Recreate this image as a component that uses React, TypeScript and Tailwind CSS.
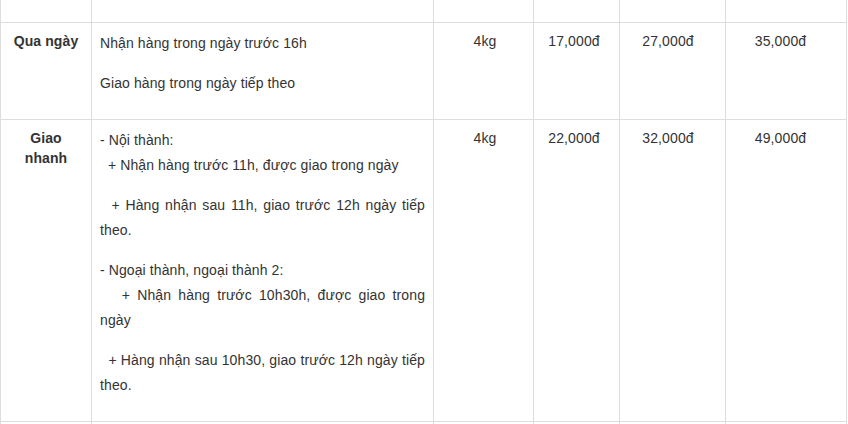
import React from "react";

const b = "border-r border-[#dddddd]";
const cols = "grid grid-cols-[91px_342px_100px_86px_106px_121px]";

export default function App() {
  const nb = "\u00a0";
  return (
    <div
      className="w-[848px] h-[424px] overflow-hidden bg-white text-[14px] leading-[20px] tracking-[0.1px] text-[#333333]"
      style={{ fontFamily: '"Liberation Sans", Arial, sans-serif' }}
    >
      <div className="w-[847px] border-l border-[#dddddd]">
        {/* previous row (cut off) */}
        <div className={`${cols} h-[23px] border-b border-[#dddddd]`}>
          <div className={b} />
          <div className={b} />
          <div className={b} />
          <div className={b} />
          <div className={b} />
          <div className={b} />
        </div>
        {/* Qua ngày */}
        <div className={`${cols} border-b border-[#dddddd]`}>
          <div className={`${b} px-2 py-2 text-center font-bold`}>Qua ngày</div>
          <div className={`${b} px-2 py-2 text-justify leading-[25px]`}>
            <p className="mb-[15px]">Nhận hàng trong ngày trước 16h</p>
            <p className="mb-[15px]">Giao hàng trong ngày tiếp theo</p>
          </div>
          <div className={`${b} pl-[11px] pr-2 py-2 text-center`}>4kg</div>
          <div className={`${b} pl-2 pr-[13px] py-2 text-center`}>17,000đ</div>
          <div className={`${b} pl-2 pr-[17px] py-2 text-center`}>27,000đ</div>
          <div className={`${b} pl-2 pr-[19px] py-2 text-center`}>35,000đ</div>
        </div>
        {/* Giao nhanh */}
        <div className={`${cols} border-b border-[#dddddd]`}>
          <div className={`${b} px-2 py-2 text-center font-bold`}>Giao nhanh</div>
          <div className={`${b} px-2 py-2 text-justify leading-[25px]`}>
            <p className="mb-[15px]">
              - Nội thành:
              <br />
              {nb}{nb}+ Nhận hàng trước 11h, được giao trong ngày
            </p>
            <p className="mb-[15px]">
              {nb}{nb}+ Hàng nhận sau 11h, giao trước 12h ngày tiếp theo.
            </p>
            <p className="mb-[15px]">
              - Ngoại thành, ngoại thành 2:
              <br />
              {nb}{nb}{nb}+ Nhận hàng trước 10h30h, được giao trong ngày
            </p>
            <p className="mb-[15px]">
              {nb}{nb}+ Hàng nhận sau 10h30, giao trước 12h ngày tiếp theo.
            </p>
          </div>
          <div className={`${b} pl-[11px] pr-2 py-2 text-center`}>4kg</div>
          <div className={`${b} pl-2 pr-[13px] py-2 text-center`}>22,000đ</div>
          <div className={`${b} pl-2 pr-[17px] py-2 text-center`}>32,000đ</div>
          <div className={`${b} pl-2 pr-[19px] py-2 text-center`}>49,000đ</div>
        </div>
        <div className={`${cols} h-[20px]`}>
          <div className={b} />
          <div className={b} />
          <div className={b} />
          <div className={b} />
          <div className={b} />
          <div className={b} />
        </div>
      </div>
    </div>
  );
}
